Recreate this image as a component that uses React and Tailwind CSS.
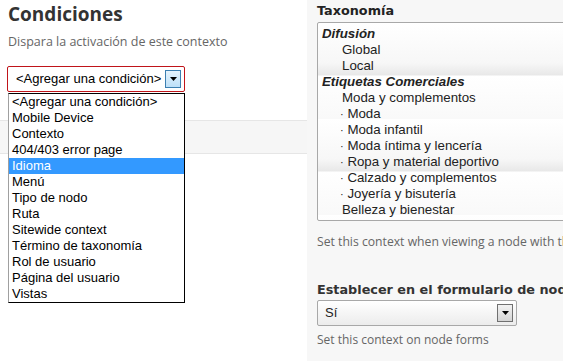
const CONDITIONS = [
  '<Agregar una condición>',
  'Mobile Device',
  'Contexto',
  '404/403 error page',
  'Idioma',
  'Menú',
  'Tipo de nodo',
  'Ruta',
  'Sitewide context',
  'Término de taxonomía',
  'Rol de usuario',
  'Página del usuario',
  'Vistas',
]

const TERMS = [
  { label: 'Difusión', group: true },
  { label: 'Global' },
  { label: 'Local' },
  { label: 'Etiquetas Comerciales', group: true },
  { label: 'Moda y complementos' },
  { label: 'Moda', child: true },
  { label: 'Moda infantil', child: true },
  { label: 'Moda íntima y lencería', child: true },
  { label: 'Ropa y material deportivo', child: true },
  { label: 'Calzado y complementos', child: true },
  { label: 'Joyería y bisutería', child: true },
  { label: 'Belleza y bienestar' },
]

function Arrow() {
  return (
    <svg width="7" height="4" viewBox="0 0 7 4">
      <path d="M0 0h7L3.5 4z" fill="#000" />
    </svg>
  )
}

export default function App() {
  return (
    <div className="flex w-[563px] h-[361px] overflow-hidden font-['Open_Sans',sans-serif] text-[#333]">
      {/* left column */}
      <div className="relative w-[307px] shrink-0 bg-white">
        <div className="px-2 pt-[1px]">
          <h2 className="text-[19px] font-bold leading-[26px] text-[#333]">Condiciones</h2>
          <p className="mt-[7px] text-[12.5px] leading-[16px] text-[#666]">Dispara la activación de este contexto</p>
          <div className="mt-[16px] ml-[-1px] flex h-[26px] w-[178px] items-center justify-between rounded-[2px] border border-[#c0141a] bg-white pl-[8px] pr-[3px] font-['Liberation_Sans',Arial,sans-serif] text-[13px] text-black">
            <span>&lt;Agregar una condición&gt;</span>
            <span className="flex h-[18px] w-[16px] items-center justify-center border border-[#3c7fb1] bg-[linear-gradient(#e5f3fd,#bde0f8)]">
              <Arrow />
            </span>
          </div>
        </div>
        <div className="mt-[28px] h-[34px] border-y border-[#e6e6e6] bg-[#f6f6f6]" />

        {/* open dropdown */}
        <ul className="absolute left-[8px] top-[93px] w-[177px] border border-black border-l-[#a0a0a0] bg-white font-['Liberation_Sans',Arial,sans-serif] text-[13px] leading-[16px] text-black">
          {CONDITIONS.map(c => (
            <li key={c} className={`pl-[3px] ${c === 'Idioma' ? 'bg-[#3399ff] text-white' : ''}`}>{c}</li>
          ))}
        </ul>
      </div>

      {/* right column */}
      <div className="flex-1 bg-[#f7f7f7] pl-[10px]">
        <div className="pt-[3px] font-['DejaVu_Sans',Verdana,sans-serif] text-[12.8px] font-bold leading-[16px] text-[#222]">Taxonomía</div>
        <div className="mt-[3px] h-[199px] w-[300px] rounded-[2px] border border-[#a8a8a8] bg-[repeating-linear-gradient(#ffffff_0px,#f7f7f7_40px,#e8e8e8_52px,#ffffff_53px,#f9f9f9_96px)] pt-[3px] font-['Liberation_Sans',Arial,sans-serif] text-[13.3px] leading-[16px] text-[#222]">
          {TERMS.map(t => (
            <div
              key={t.label}
              className={t.group ? 'pl-[4px] font-bold italic' : t.child ? 'pl-[22px]' : 'pl-[24px]'}
            >
              {t.child ? <><span className="text-[11px]">·</span> {t.label}</> : t.label}
            </div>
          ))}
        </div>
        <p className="mt-[13px] whitespace-nowrap text-[12.2px] leading-[16px] text-[#666]">Set this context when viewing a node with the selected taxonomy terms</p>

        <div className="mt-[31px] whitespace-nowrap font-['DejaVu_Sans',Verdana,sans-serif] text-[12.8px] font-bold leading-[18px] text-[#333]">Establecer en el formulario de nodo</div>
        <div className="mt-[1px] flex h-[26px] w-[200px] items-center justify-between rounded-[2px] border border-[#a8a8a8] bg-[linear-gradient(#ffffff,#ececec)] pl-[7px] pr-[3px] font-['Liberation_Sans',Arial,sans-serif] text-[13px] text-[#222]">
          <span>Sí</span>
          <span className="flex h-[18px] w-[16px] items-center justify-center border border-[#707070] bg-[linear-gradient(#f2f2f2,#d4d4d4)]">
            <Arrow />
          </span>
        </div>
        <p className="mt-[6px] whitespace-nowrap text-[12px] leading-[16px] text-[#666]">Set this context on node forms</p>
      </div>
    </div>
  )
}
